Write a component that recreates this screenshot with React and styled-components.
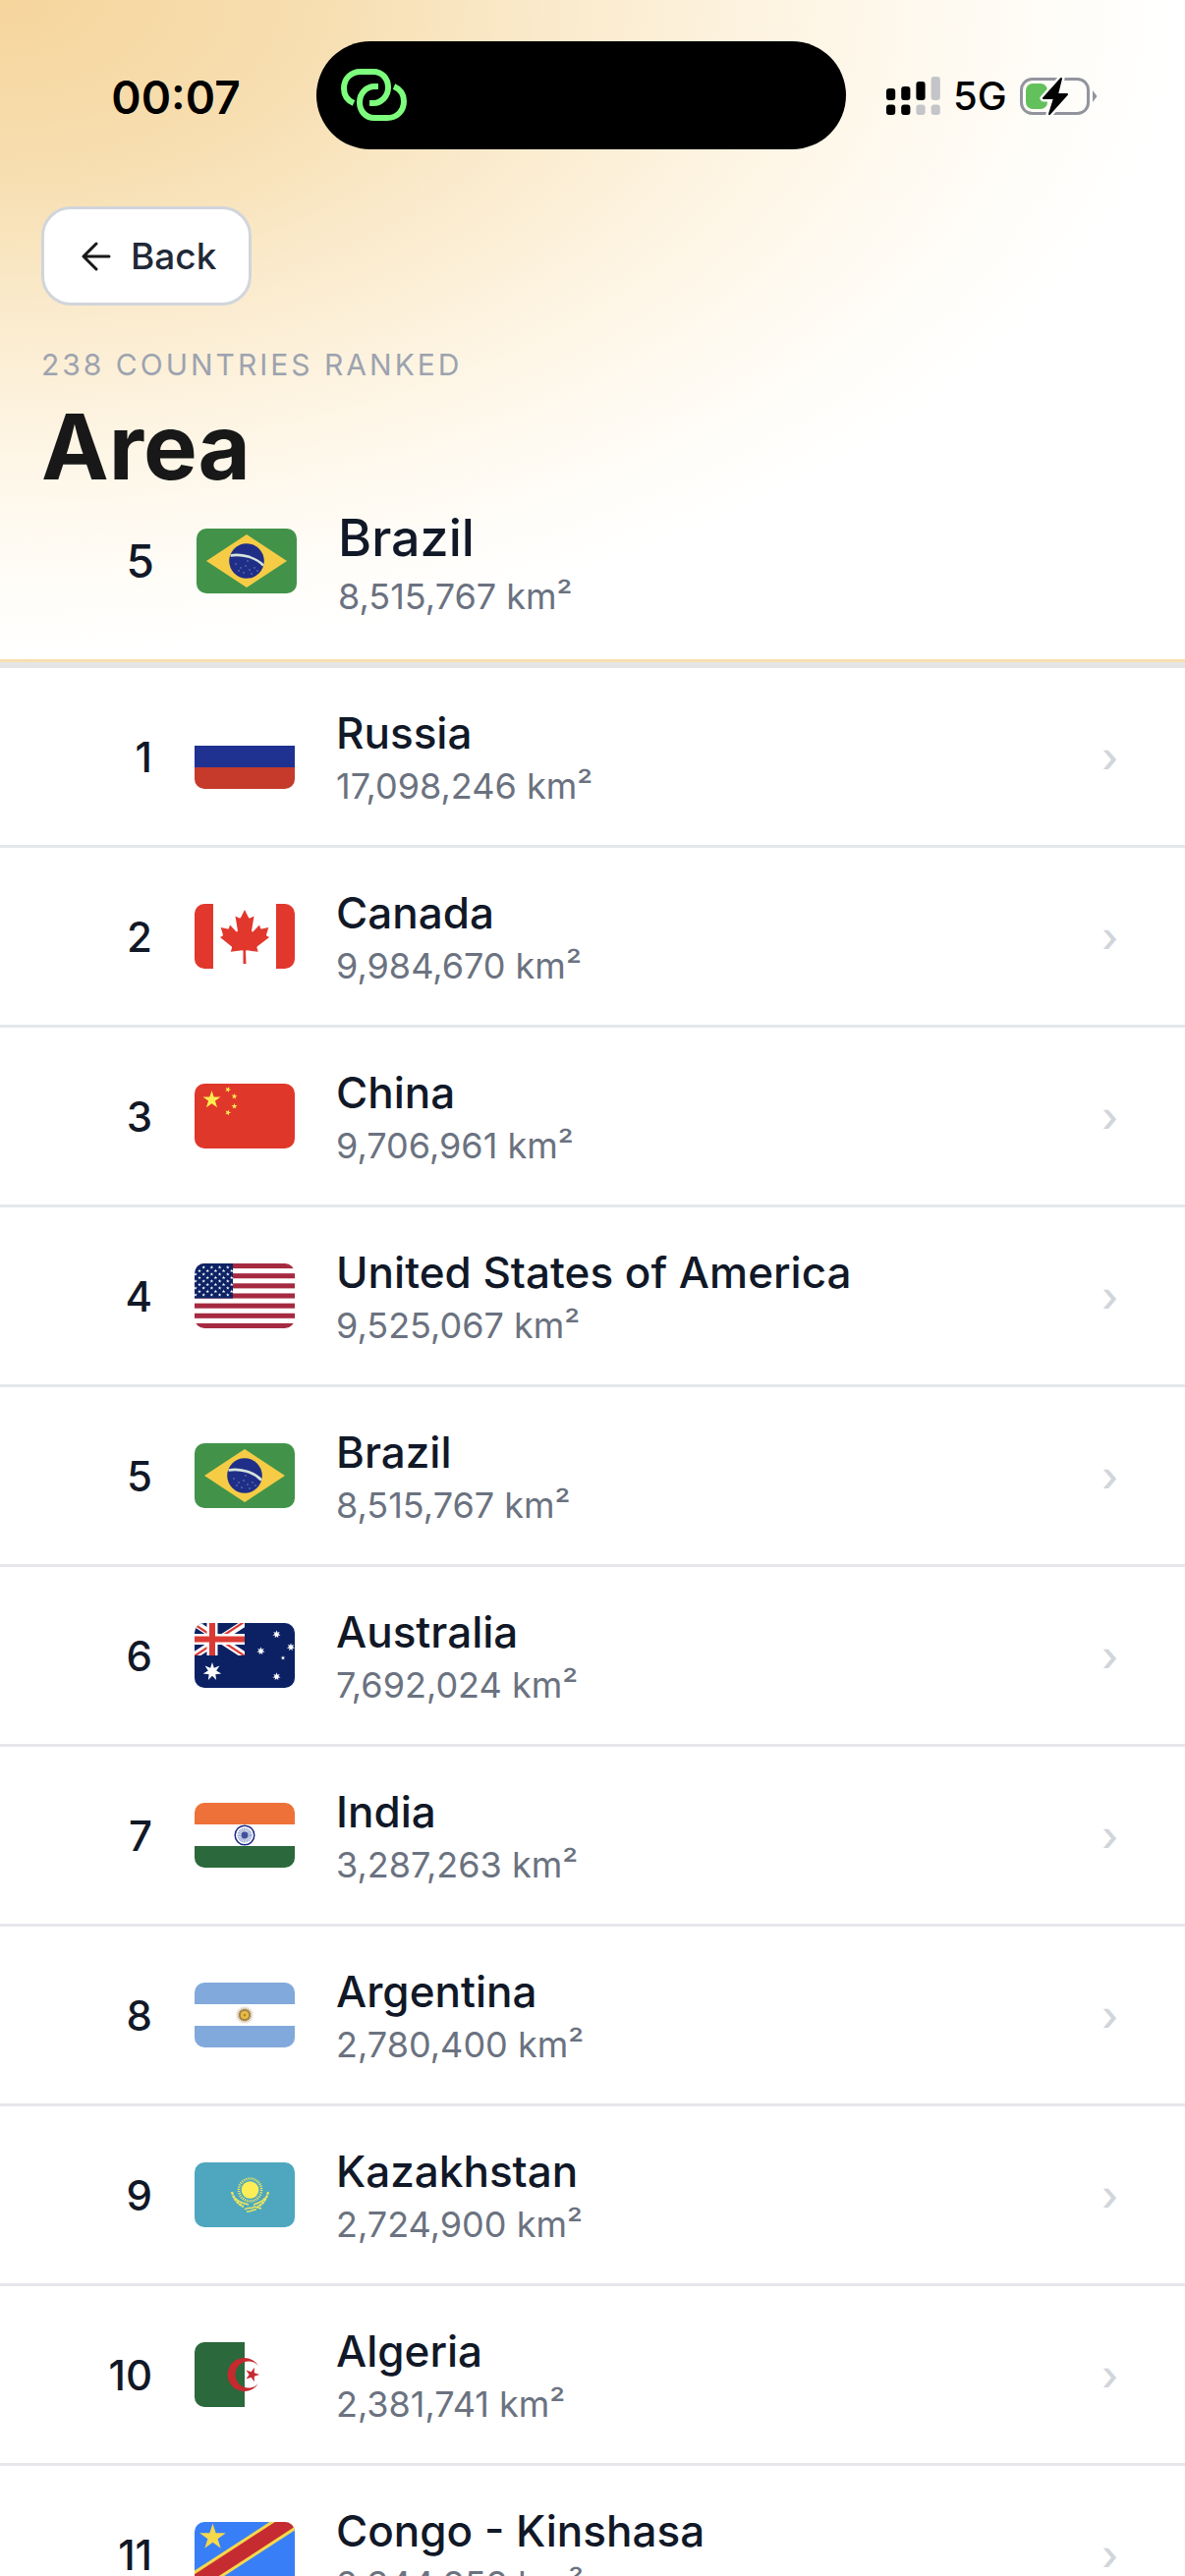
import React from 'react';
import styled, { createGlobalStyle } from 'styled-components';

const GlobalStyle = createGlobalStyle`
* { box-sizing: border-box; }
body {
    margin: 0;
    background: #fff;
    color: #111827;
    font-family: Inter, "Liberation Sans", sans-serif;
}
`;

const Page = styled.div`
height: 100vh;
overflow: hidden;
background: #fff;
`;

const Header = styled.header`
border-bottom: 3px solid #f8dfb0;
background: radial-gradient(ellipse 100% 100% at 0 0, #f6d59c 0%, #f7dfb2 28%, #fbecd0 50%, #fef7e9 72%, #fffdf9 90%, #fff 100%);
`;

const StatusBar = styled.div`
display: grid;
grid-template-columns: 322fr 539fr 345fr;
align-items: center;
padding-top: 42px;
font-weight: 600;
color: #000;
`;

const Clock = styled.time`
padding: 4px 0 0 36px;
text-align: center;
font-size: 46px;
line-height: 60px;
`;

const Island = styled.div`
display: flex;
align-items: center;
height: 110px;
padding-left: 24px;
border-radius: 55px;
background: #000;
`;

const Indicators = styled.div`
display: flex;
align-items: center;
gap: 13px;
padding: 2px 0 0 41px;
font-size: 40px;
font-weight: 500;
line-height: 48px;
`;

const Intro = styled.div`
padding: 58px 42px 0;
`;

const BackButton = styled.button`
display: flex;
align-items: center;
gap: 20px;
height: 101px;
padding: 0 33px 0 38px;
border: 3px solid #d1d5db;
border-radius: 30px;
background: #fff;
color: #1f2937;
font: 500 37px Inter, "Liberation Sans", sans-serif;
`;

const Eyebrow = styled.p`
margin: 40px 0 0;
color: #9ca3af;
font-size: 30px;
line-height: 40px;
letter-spacing: 3px;
text-transform: uppercase;
`;

const Title = styled.h1`
margin: 6px 0 0;
color: #181818;
font-size: 92px;
font-weight: 700;
line-height: 116px;
`;

const Entry = styled.div`
display: flex;
align-items: center;
height: ${props => props.$pinned ? '158px' : '180px'};
padding: ${props => props.$pinned ? '0 60px 42px 2px' : '0 60px 0 0'};
`;

const Rank = styled.span`
width: 155px;
margin-right: 43px;
text-align: right;
font-size: ${props => props.$pinned ? '46px' : '42px'};
font-weight: 500;
`;

const Info = styled.span`
flex: 1;
padding: ${props => props.$pinned ? '8px 0 0 42px' : '6px 0 0 42px'};
`;

const Name = styled.span`
display: block;
font-size: ${props => props.$pinned ? '52px' : '44px'};
line-height: ${props => props.$pinned ? '64px' : '54px'};
font-weight: 500;
`;

const Value = styled.span`
display: block;
color: #6b7280;
font-size: 36px;
line-height: 54px;
`;

const Chevron = styled.span`
padding-right: 8px;
color: #d1d5db;
font-size: 42px;
font-weight: 500;
`;

const List = styled.ol`
margin: 0;
padding: 0;
border-top: 6px solid #e5e5e5;
list-style: none;
`;

const Item = styled.li`
border-bottom: 3px solid #e5e7eb;
`;

const ItemLink = styled.a`
display: block;
color: inherit;
text-decoration: none;
`;

const FlagBox = styled.svg`
flex: none;
width: 102px;
height: 66px;
border-radius: 10px;
`;

// points of an n-pointed star
const star = (cx, cy, r, n = 5, inner = 0.382, turn = 0) => {
    const pts = [];
    for (let i = 0; i < n * 2; i++) {
        const a = Math.PI * i / n - Math.PI / 2 + turn;
        const d = i % 2 ? r * inner : r;
        pts.push(`${(cx + d * Math.cos(a)).toFixed(2)},${(cy + d * Math.sin(a)).toFixed(2)}`);
    }
    return pts.join(' ');
};

const Russia = () => (
    <>
        <rect width="102" height="22" fill="#fff" />
        <rect y="22" width="102" height="22" fill="#1f3191" />
        <rect y="44" width="102" height="22" fill="#c53a2b" />
    </>
);

const Canada = () => (
    <>
        <rect width="102" height="66" fill="#fff" />
        <rect width="19" height="66" fill="#e1372d" />
        <rect x="83" width="19" height="66" fill="#e1372d" />
        <path fill="#e1372d" d="M51 6l-4 8c-.6.8-1.3.7-2 .3l-3.5-1.8 2.3 14c.5 2.3-1.1 2.3-1.9 1.3L36 21.500l-1 3.200c-.1.4-.6.9-1.300.7l-7-1.400 1.900 6.300c.4 1.500.7 2.100-.4 2.500L26 34l11.500 9.200c.5.4.7 1 .5 1.600l-1.200 4c4-.5 7.700-1.100 11.700-1.500.4 0 1 .5 1 1L49.500 61h3l-.5-12.700c0-.5.5-1 1-1 4 .4 7.700 1 11.700 1.500l-1.200-4c-.2-.6 0-1.200.5-1.600L76 34l-2.200-1.200c-1.100-.4-.8-1-.4-2.500l1.900-6.300-7 1.400c-.7.2-1.200-.3-1.300-.7l-1-3.200-5.900 6.300c-.8 1-2.400 1-1.900-1.300l2.300-14-3.500 1.800c-.7.4-1.400.5-2-.3z" />
    </>
);

const China = () => (
    <>
        <rect width="102" height="66" fill="#e0372b" />
        <g fill="#fcec4f">
            <polygon points={star(17.5, 16.5, 9.5)} />
            <polygon points={star(34, 6, 3.2, 5, 0.4, 0.4)} />
            <polygon points={star(40.5, 13, 3.2, 5, 0.4, 0.15)} />
            <polygon points={star(40.5, 23, 3.2)} />
            <polygon points={star(34, 29.5, 3.2, 5, 0.4, 0.35)} />
        </g>
    </>
);

const Usa = () => (
    <>
        <rect width="102" height="66" fill="#fff" />
        {[0, 1, 2, 3, 4, 5, 6].map(i => <rect key={i} y={i * 10.15} width="102" height="5.08" fill="#a52a41" />)}
        <rect width="39" height="35.5" fill="#0c2265" />
        {[...Array(9)].map((_, r) => [...Array(5)].map((_, c) => (
            <polygon key={`${r}-${c}`} fill="#fff" points={star((r % 2 ? 5 : 1) + c * 8.2, 4 + r * 3.5, 2)} />
        )))}
    </>
);

const Brazil = () => (
    <>
        <rect width="102" height="66" fill="#429349" />
        <path d="M51 6L92 33 51 60 10 33z" fill="#f6cc46" />
        <circle cx="51" cy="33" r="17.8" fill="#1f2f88" />
        <path d="M34.5 27.5C46 25.5 60 29 68 37.5" fill="none" stroke="#d7e4dc" strokeWidth="2.6" />
        <g fill="#8f9cc0">
            {[[40, 36], [45, 40], [50, 38], [54, 42], [59, 40], [48, 45], [56, 46], [62, 43], [43, 43], [52, 33]].map(([x, y]) => <circle key={x} cx={x} cy={y} r=".7" />)}
        </g>
    </>
);

const Australia = () => (
    <>
        <rect width="102" height="66" fill="#0b2164" />
        <svg width="51" height="33" viewBox="0 0 51 33">
            <path d="M0 0l51 33M51 0L0 33" stroke="#fff" strokeWidth="7" />
            <path d="M0 1.5l26 17M25 16.500l26 17M51-1.500l-26 17M26 16.500l-26 17" stroke="#db3a34" strokeWidth="2.2" />
            <path d="M18 0v33M0 16.5h51" stroke="#fff" strokeWidth="11" />
            <path d="M18 0v33M0 16.5h51" stroke="#db3a34" strokeWidth="6" />
        </svg>
        <g fill="#fff">
            <polygon points={star(18, 49.5, 9.5, 7, 0.45)} />
            <polygon points={star(83.5, 11.5, 4.2, 7, 0.45)} />
            <polygon points={star(67.5, 28.5, 4.2, 7, 0.45)} />
            <polygon points={star(98, 24.5, 4.2, 7, 0.45)} />
            <polygon points={star(83.5, 54.5, 4.2, 7, 0.45)} />
            <polygon points={star(90, 35.5, 2.5)} />
        </g>
    </>
);

const India = () => (
    <>
        <rect width="102" height="66" fill="#fff" />
        <rect width="102" height="22" fill="#ee7139" />
        <rect y="44" width="102" height="22" fill="#2b683b" />
        <circle cx="51" cy="33" r="9.8" fill="#fff" stroke="#1c2a84" strokeWidth="1.5" />
        <circle cx="51" cy="33" r="5" fill="none" stroke="#93a3cf" strokeWidth="5" strokeDasharray=".8 .5" />
        <circle cx="51" cy="33" r="3.4" fill="#42519c" />
    </>
);

const Argentina = () => (
    <>
        <rect width="102" height="66" fill="#82a9db" />
        <rect y="22" width="102" height="22" fill="#fff" />
        <polygon points={star(51, 33, 9.5, 24, 0.6)} fill="#c9b08c" />
        <circle cx="51" cy="33" r="6" fill="#a1854a" />
        <circle cx="51" cy="33" r="4" fill="#edbd3f" />
        <circle cx="51" cy="33" r="1.5" fill="#b98b35" />
    </>
);

const Kazakhstan = () => (
    <>
        <rect width="102" height="66" fill="#4ea7be" />
        <g fill="none" stroke="#f3e85b">
            <circle cx="56.5" cy="28" r="11.5" strokeWidth="2.6" strokeDasharray="1.1 1.15" />
            <path d="M38 30c2 8 7 13 12 15M75 30c-2 8-6 13-11 15" strokeWidth="2.2" strokeDasharray="3 .6" />
            <path d="M41 36c4 5 9 6 14 7M72 36c-4 5-8 6-12 7" strokeWidth="1.3" />
            <path d="M51 48c5-4 6 1 10-3l7 2M53 50c5 .5 5-2 10-2" strokeWidth="1.5" />
        </g>
        <circle cx="56.5" cy="28" r="8.8" fill="#fdee58" />
    </>
);

const Algeria = () => (
    <>
        <rect width="102" height="66" fill="#fff" />
        <rect width="51" height="66" fill="#2b683b" />
        <path fill="#c52a2f" d="M65 24A17 17 0 1 0 65 42 13.5 13.5 0 1 1 65 24z" />
        <polygon points={star(58.5, 33, 7.5, 5, 0.382, Math.PI / 2)} fill="#c52a2f" />
    </>
);

const Congo = () => (
    <>
        <rect width="102" height="66" fill="#387ef7" />
        <path d="M-6 66L108-8" stroke="#f6d84b" strokeWidth="21" />
        <path d="M-6 66L108-8" stroke="#c52c31" strokeWidth="15" />
        <polygon points={star(18.5, 15.5, 14)} fill="#f6d84b" />
    </>
);

const countries = [
    { name: 'Russia', area: '17,098,246', flag: Russia },
    { name: 'Canada', area: '9,984,670', flag: Canada },
    { name: 'China', area: '9,706,961', flag: China },
    { name: 'United States of America', area: '9,525,067', flag: Usa },
    { name: 'Brazil', area: '8,515,767', flag: Brazil },
    { name: 'Australia', area: '7,692,024', flag: Australia },
    { name: 'India', area: '3,287,263', flag: India },
    { name: 'Argentina', area: '2,780,400', flag: Argentina },
    { name: 'Kazakhstan', area: '2,724,900', flag: Kazakhstan },
    { name: 'Algeria', area: '2,381,741', flag: Algeria },
    { name: 'Congo - Kinshasa', area: '2,344,858', flag: Congo }
];

const LinkIcon = () => (
    <svg width="69" height="54" viewBox="0 0 69 54" fill="none" stroke="#7dff7d" strokeWidth="6">
        <path d="M14 35C7 32 4 26 4 20 4 10 11 3 21 3h13c9 0 15 7 15 16s-7 16-15 16h-4" />
        <path d="M55 18c7 3 10 9 10 15 0 10-7 17-17 17H35c-9 0-15-7-15-16s7-16 15-16h4" />
    </svg>
);

const SignalIcon = () => (
    <svg width="55" height="40" viewBox="0 0 55 40">
        {[12, 14, 19, 24].map((h, i) => (
            <g key={h}>
                <rect x={i * 15.2} y={24 - h} width="9.2" height={h} rx="3" fill={i < 3 ? '#000' : '#c4c5c8'} />
                <rect x={i * 15.2} y="28.5" width="9.2" height="10.5" rx="3" fill={i < 2 ? '#000' : '#c4c5c8'} />
            </g>
        ))}
    </svg>
);

const BatteryIcon = () => (
    <svg width="80" height="40" viewBox="0 0 80 40">
        <rect x="1.5" y="2.5" width="68" height="35" rx="11" fill="none" stroke="#92949d" strokeWidth="3" />
        <path d="M74 14l4.500 6-4.500 6z" fill="#92949d" />
        <rect x="6" y="7" width="22" height="26" rx="7" fill="#62c15c" />
        <path d="M42 2L24 22h11l-5 16 18-20H38z" fill="#fff" stroke="#fff" strokeWidth="7" strokeLinejoin="round" />
        <path d="M42 2L24 22h11l-5 16 18-20H38z" fill="#000" stroke="#000" strokeWidth="2" strokeLinejoin="round" />
    </svg>
);

const ArrowIcon = () => (
    <svg width="30" height="30" viewBox="0 0 30 30" fill="none" stroke="#181818" strokeWidth="3" strokeLinecap="round" strokeLinejoin="round">
        <path d="M28 15H2M15 2L2 15l13 13" />
    </svg>
);

const CountryEntry = ({ rank, country, pinned }) => {
    const Flag = country.flag;
    return (
        <Entry $pinned={pinned}>
            <Rank $pinned={pinned}>{rank}</Rank>
            <FlagBox viewBox="0 0 102 66" aria-hidden="true"><Flag /></FlagBox>
            <Info $pinned={pinned}>
                <Name $pinned={pinned}>{country.name}</Name>
                <Value>{country.area} km²</Value>
            </Info>
            {!pinned && <Chevron aria-hidden="true">›</Chevron>}
        </Entry>
    );
};

const App = () => (
    <Page>
        <GlobalStyle />
        <Header>
            <StatusBar>
                <Clock>00:07</Clock>
                <Island><LinkIcon /></Island>
                <Indicators>
                    <SignalIcon />
                    <span>5G</span>
                    <BatteryIcon />
                </Indicators>
            </StatusBar>
            <Intro>
                <BackButton type="button"><ArrowIcon />Back</BackButton>
                <Eyebrow>238 countries ranked</Eyebrow>
                <Title>Area</Title>
            </Intro>
            <CountryEntry pinned rank={5} country={countries[4]} />
        </Header>
        <List>
            {countries.map((country, i) => (
                <Item key={country.name}>
                    <ItemLink href="#">
                        <CountryEntry rank={i + 1} country={country} />
                    </ItemLink>
                </Item>
            ))}
        </List>
    </Page>
);

export default App;
